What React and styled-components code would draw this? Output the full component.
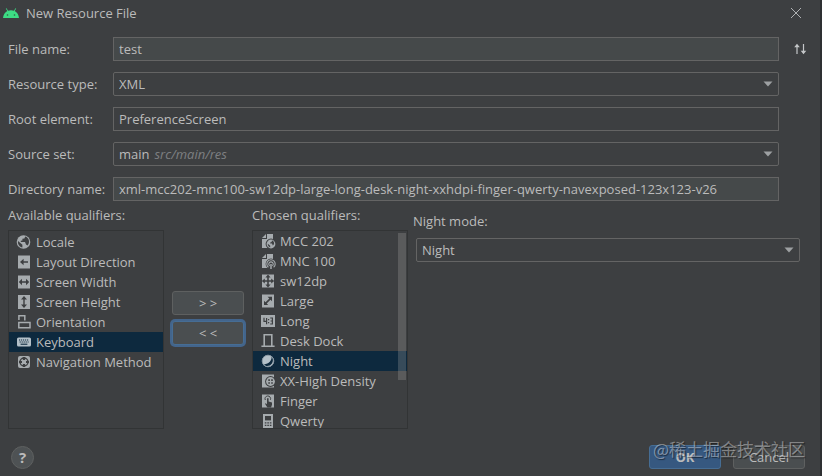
import { useState } from 'react';
import styled, { createGlobalStyle } from 'styled-components';

const resourceTypes = ['XML', 'Values', 'Layout', 'Drawable'];

const availableQualifiers = [
  { name: 'Locale', icon: 'globe' },
  { name: 'Layout Direction', icon: 'direction' },
  { name: 'Screen Width', icon: 'width' },
  { name: 'Screen Height', icon: 'height' },
  { name: 'Orientation', icon: 'orientation' },
  { name: 'Keyboard', icon: 'keyboard' },
  { name: 'Navigation Method', icon: 'navigation' },
];

const chosenQualifiers = [
  { name: 'MCC 202', icon: 'mcc' },
  { name: 'MNC 100', icon: 'mnc' },
  { name: 'sw12dp', icon: 'smallest' },
  { name: 'Large', icon: 'size' },
  { name: 'Long', icon: 'ratio' },
  { name: 'Desk Dock', icon: 'dock' },
  { name: 'Night', icon: 'night' },
  { name: 'XX-High Density', icon: 'density' },
  { name: 'Finger', icon: 'touch' },
  { name: 'Qwerty', icon: 'phone' },
];

const light = '#a6abae';
const dark = '#3d3f41';

const icons = {
  globe: (
    <>
      <circle cx="7.5" cy="8" r="6.8" fill={light} />
      <path d="M2 7 L6.4 10.8 V13.6 C3.6 13 1.6 10.4 2 7 Z" fill={dark} />
      <path d="M9.2 2.4 L8.4 4.4 L6.4 4.8 V6.4 L4.8 6.8 V8 H9 L10 10.4 L11.6 11.4 C14.2 8.4 13.2 3.6 9.2 2.4 Z" fill={dark} />
    </>
  ),
  direction: (
    <>
      <path d="M2 1.5h12v13H2z" fill={light} />
      <path d="M7.6 4.8 V7.2 H12 V8.8 H7.6 V11.2 L4 8 Z" fill={dark} />
    </>
  ),
  width: (
    <>
      <path d="M2 1.5h12v13H2z" fill={light} />
      <path d="M6 4.8 V7.2 H10 V4.8 L13.2 8 L10 11.2 V8.8 H6 V11.2 L2.8 8 Z" fill={dark} />
    </>
  ),
  height: (
    <>
      <path d="M2 1h12v14H2z" fill={light} />
      <path d="M5 5.4 H7.3 V10.6 H5 L8 14 L11 10.6 H8.7 V5.4 H11 L8 2 Z" fill={dark} />
    </>
  ),
  orientation: (
    <path d="M2.9 6 V1.8 H8.8 V6.6 M2.8 8.6 H14 V13.8 H2.8 Z" fill="none" stroke={light} strokeWidth="1.5" />
  ),
  keyboard: (
    <>
      <rect x="1" y="3.5" width="14" height="9" rx="1.6" fill="#b4c0c8" />
      <path d="M3 6h10M3.6 8h9" stroke="#0d293e" strokeWidth="1.1" strokeDasharray="1.2 0.8" />
      <path d="M4.6 10.2h6.8" stroke="#0d293e" strokeWidth="1.1" />
    </>
  ),
  navigation: (
    <>
      <rect x="2" y="2" width="12" height="12" rx="2" fill={light} />
      <circle cx="8" cy="8" r="4" fill="none" stroke={dark} strokeWidth="1.4" />
      <path d="M6.9 3h2.2v3H6.9zM6.9 10h2.2v3H6.9zM3 6.9h3v2.2H3zM10 6.9h3v2.2h-3z" fill={dark} />
    </>
  ),
  mcc: (
    <>
      <path d="M7 1h6v14H2V6h5z" fill={light} />
      <path d="M2 5 L6 1 V5 Z" fill={light} />
      <circle cx="11" cy="11" r="5.4" fill={dark} />
      <circle cx="11" cy="11" r="4.4" fill={light} />
      <path d="M7.8 10.8 L10.2 12.8 V14.4 C8.6 14 7.6 12.4 7.8 10.8 Z M12 7.6 L11.6 9 L10.2 9.4 V10.6 H12 L12.8 12.6 C15 11.4 14.2 8.2 12 7.6 Z" fill={dark} />
    </>
  ),
  mnc: (
    <>
      <path d="M7 1h6v14H2V6h5z" fill={light} />
      <path d="M2 5 L6 1 V5 Z" fill={light} />
      <circle cx="11" cy="11" r="5.4" fill={dark} />
      <path d="M8.4 14.3 A4.2 4.2 0 1 1 13.6 14.3 M9.6 12.8 A2.2 2.2 0 1 1 12.4 12.8" fill="none" stroke={light} strokeWidth="1.1" />
      <path d="M11 11v5" stroke={light} strokeWidth="1.5" />
    </>
  ),
  smallest: (
    <>
      <path d="M2 1.5h12v13H2z" fill={light} />
      <path d="M8 1.5 L10.6 4.6 H8.8 V7.2 H11.2 V5.4 L14.2 8 L11.2 10.6 V8.8 H8.8 V11.4 H10.6 L8 14.5 L5.4 11.4 H7.2 V8.8 H4.8 V10.6 L1.8 8 L4.8 5.4 V7.2 H7.2 V4.6 H5.4 Z" fill={dark} />
    </>
  ),
  size: (
    <>
      <path d="M2 1.5h12v13H2z" fill={light} />
      <path d="M7.6 3.8 H12 V8.2 L10.5 6.7 L6.7 10.5 L8.2 12 H4 V7.8 L5.5 9.3 L9.3 5.5 Z" fill={dark} />
    </>
  ),
  ratio: (
    <>
      <path d="M1 2h14v12H1z" fill={light} />
      <path d="M4 4.8V8.4H7M6.6 5V11.2M10.2 5H12.4V11H10.2M10.6 8H12.4" fill="none" stroke={dark} strokeWidth="1.2" />
      <path d="M8 6h1.2v1.3H8zM8 9h1.2v1.3H8z" fill={dark} />
    </>
  ),
  dock: (
    <path d="M4.2 12.4V1.8H11.8V12.4M1.4 13.2H14.6" fill="none" stroke={light} strokeWidth="1.6" />
  ),
  night: (
    <>
      <circle cx="8" cy="8" r="6" fill="#b4c0c8" />
      <path d="M11.6 3.6 C12 7.6 9 11 4 11.4 C5.2 12.8 7 13.2 8.6 12.8 C11.8 12 13.6 8.6 12.6 5.2 Z" fill="#0d293e" />
      <circle cx="8" cy="8" r="5.8" fill="none" stroke="#8796a1" strokeWidth="1" />
    </>
  ),
  density: (
    <>
      <path d="M2 1.5h12v13H2z" fill={light} />
      <circle cx="10.5" cy="8.5" r="5.4" fill={dark} />
      <circle cx="10.5" cy="8.5" r="4.4" fill={light} />
      <path d="M8.3 6.3h1.6v1.6H8.3zM11.2 6.3h1.6v1.6h-1.6zM8.3 9.2h1.6v1.6H8.3zM11.2 9.2h1.6v1.6h-1.6z" fill={dark} />
    </>
  ),
  touch: (
    <>
      <path d="M2 1.5h12v13H2z" fill={light} />
      <path d="M7 5.2h1.6v3.2l3.4 1v2.4l-1 2.7H7.4L5 10.8l.8-.6 1.2 1z" fill={dark} />
      <path d="M5.3 7 A2.8 2.8 0 1 1 10.4 6.8" fill="none" stroke={dark} strokeWidth="1" />
    </>
  ),
  phone: (
    <>
      <path d="M3 1h10v14H3z" fill={light} />
      <path d="M5 3h6v4.4H5z" fill={dark} />
      <path d="M4.8 9.8h6.6M4.8 12.4h6.6" stroke={dark} strokeWidth="1.3" strokeDasharray="1.6 0.9" />
    </>
  ),
};

function QualifierList({ id, items, selected, onSelect, inset, scrollable }) {
  return (
    <ListFrame>
      <List role="listbox" aria-labelledby={id} $inset={inset}>
        {items.map((item) => (
          <ListItem
            key={item.name}
            role="option"
            aria-selected={item.name === selected}
            $selected={item.name === selected}
            onClick={() => onSelect(item.name)}
          >
            <svg width="16" height="16" viewBox="0 0 16 16" aria-hidden="true">
              {icons[item.icon]}
            </svg>
            {item.name}
          </ListItem>
        ))}
      </List>
      {scrollable && <ScrollThumb />}
    </ListFrame>
  );
}

function DropDown({ id, options, value, onChange, hint }) {
  return (
    <SelectBox>
      <Select id={id} value={value} onChange={(e) => onChange(e.target.value)}>
        {options.map((option) => (
          <option key={option} value={option}>{option}</option>
        ))}
      </Select>
      {hint && (
        <SelectHint>
          <HintSpacer aria-hidden="true">{value}</HintSpacer>
          {hint}
        </SelectHint>
      )}
      <Arrow viewBox="0 0 10 6" aria-hidden="true">
        <path d="M0.5 0.5h9L5 5.5z" fill="#9da0a2" />
      </Arrow>
    </SelectBox>
  );
}

export default function App() {
  const [fileName, setFileName] = useState('test');
  const [resourceType, setResourceType] = useState('XML');
  const [rootElement, setRootElement] = useState('PreferenceScreen');
  const [sourceSet, setSourceSet] = useState('main');
  const [nightMode, setNightMode] = useState('Night');
  const [available, setAvailable] = useState('Keyboard');
  const [chosen, setChosen] = useState('Night');

  return (
    <>
      <GlobalStyle />
      <Dialog>
        <TitleBar>
          <svg width="16" height="10" viewBox="0 0 16 10" aria-hidden="true">
            <path d="M0 10 C0.3 6.8 1.9 4.4 4.3 3.1 L2.8 0.6 L3.5 0.2 L5.1 2.8 C7 2 9 2 10.9 2.8 L12.5 0.2 L13.2 0.6 L11.7 3.1 C14.1 4.4 15.7 6.8 16 10 Z" fill="#3ddc84" />
            <circle cx="4.5" cy="7" r="0.8" fill="#2d5c43" />
            <circle cx="11.5" cy="7" r="0.8" fill="#2d5c43" />
          </svg>
          <Title>New Resource File</Title>
          <IconButton type="button" aria-label="Close">
            <svg width="12" height="12" viewBox="0 0 12 12">
              <path d="M1 1l10 10M11 1L1 11" stroke="#afb1b3" strokeWidth="1" />
            </svg>
          </IconButton>
        </TitleBar>

        <Form>
          <FormLabel htmlFor="fileName">File name:</FormLabel>
          <TextField id="fileName" $filled value={fileName} onChange={(e) => setFileName(e.target.value)} />
          <IconButton type="button" aria-label="Sort">
            <svg width="14" height="12" viewBox="0 0 14 12">
              <path d="M4 11V2M10.5 1v9" stroke="#c4c6c8" strokeWidth="1.2" />
              <path d="M1.2 4.2L4 0.8l2.8 3.4zM7.7 7.8l2.8 3.4 2.8-3.4z" fill="#c4c6c8" />
            </svg>
          </IconButton>

          <FormLabel htmlFor="resourceType">Resource type:</FormLabel>
          <DropDown id="resourceType" options={resourceTypes} value={resourceType} onChange={setResourceType} />

          <FormLabel htmlFor="rootElement">Root element:</FormLabel>
          <TextField id="rootElement" value={rootElement} onChange={(e) => setRootElement(e.target.value)} />

          <FormLabel htmlFor="sourceSet">Source set:</FormLabel>
          <DropDown
            id="sourceSet"
            options={['main', 'debug', 'release']}
            value={sourceSet}
            onChange={setSourceSet}
            hint={`src/${sourceSet}/res`}
          />

          <FormLabel htmlFor="directoryName">Directory name:</FormLabel>
          <TextField
            id="directoryName"
            $filled
            readOnly
            value="xml-mcc202-mnc100-sw12dp-large-long-desk-night-xxhdpi-finger-qwerty-navexposed-123x123-v26"
          />
        </Form>

        <Qualifiers>
          <ListColumn>
            <ListLabel id="available">Available qualifiers:</ListLabel>
            <QualifierList id="available" items={availableQualifiers} selected={available} onSelect={setAvailable} inset />
          </ListColumn>
          <MoveButtons>
            <Button type="button">&gt; &gt;</Button>
            <Button type="button" $focused>&lt; &lt;</Button>
          </MoveButtons>
          <ListColumn>
            <ListLabel id="chosen">Chosen qualifiers:</ListLabel>
            <QualifierList id="chosen" items={chosenQualifiers} selected={chosen} onSelect={setChosen} scrollable />
          </ListColumn>
          <Options>
            <OptionLabel htmlFor="nightMode">Night mode:</OptionLabel>
            <OptionField>
              <DropDown id="nightMode" options={['Night', 'Not Night']} value={nightMode} onChange={setNightMode} />
            </OptionField>
          </Options>
        </Qualifiers>

        <Footer>
          <HelpButton type="button" aria-label="Help">?</HelpButton>
          <FooterButtons>
            <Button type="button" $primary>OK</Button>
            <Button type="button">Cancel</Button>
            <Watermark>@稀土掘金技术社区</Watermark>
          </FooterButtons>
        </Footer>
      </Dialog>
    </>
  );
}

const GlobalStyle = createGlobalStyle`
  * {
    box-sizing: border-box;
  }
  body {
    margin: 0;
    background-color: #3d3f41;
  }
  body, button, input, select {
    font-family: 'Open Sans', 'Noto Sans CJK SC', sans-serif;
    font-size: 13px;
    color: #bbbbbb;
  }
`;
const Dialog = styled.main`
  min-height: 100vh;
  display: flex;
  flex-direction: column;
  background-color: #3d3f41;
  border-right: 2px solid #2e3032;
`;
const TitleBar = styled.header`
  height: 25px;
  padding: 0 18px 0 3px;
  display: flex;
  align-items: center;
  gap: 7px;
`;
const Title = styled.h1`
  flex: 1;
  margin: 0;
  font-size: 13px;
  font-weight: 400;
`;
const IconButton = styled.button`
  padding: 0;
  border: none;
  background: none;
  display: flex;
  align-items: center;
  justify-content: center;
`;
const Form = styled.form`
  padding: 12px 0 0 8px;
  display: grid;
  grid-template-columns: 105px 1fr 41px;
  grid-auto-rows: 24px;
  row-gap: 11px;
  align-items: center;
`;
const FormLabel = styled.label`
  grid-column: 1;
`;
const TextField = styled.input`
  width: 100%;
  height: 24px;
  padding: 0 5px;
  border: 1px solid #646464;
  background-color: ${({ $filled }) => ($filled ? '#45494a' : '#3d3f41')};
  outline: none;
`;
const SelectBox = styled.div`
  position: relative;
`;
const Select = styled.select`
  display: block;
  width: 100%;
  height: 24px;
  padding: 0 24px 0 5px;
  border: 1px solid #646464;
  border-radius: 2px;
  background-color: #3d3f41;
  appearance: none;
  outline: none;
`;
const SelectHint = styled.span`
  position: absolute;
  top: 0;
  left: 6px;
  line-height: 24px;
  font-style: italic;
  color: #7d7f81;
  pointer-events: none;
`;
const HintSpacer = styled.span`
  margin-right: 5px;
  font-style: normal;
  visibility: hidden;
`;
const Arrow = styled.svg`
  position: absolute;
  top: 9px;
  right: 6px;
  width: 10px;
  height: 6px;
  pointer-events: none;
`;
const Qualifiers = styled.section`
  padding: 0 20px 0 8px;
  display: grid;
  grid-template-columns: 156px 88px 156px 1fr;
`;
const ListColumn = styled.div`
  display: flex;
  flex-direction: column;
`;
const ListLabel = styled.span`
  line-height: 29px;
`;
const ListFrame = styled.div`
  position: relative;
  height: 199px;
  border: 1px solid #323435;
`;
const List = styled.ul`
  height: 100%;
  margin: 0;
  padding: ${({ $inset }) => ($inset ? '1px 0' : '0')};
  list-style: none;
  overflow: hidden;
`;
const ListItem = styled.li`
  height: 20px;
  padding-left: 7px;
  display: flex;
  align-items: center;
  gap: 4px;
  white-space: nowrap;
  cursor: default;
  background-color: ${({ $selected }) => ($selected ? '#0d293e' : 'transparent')};
`;
const ScrollThumb = styled.span`
  position: absolute;
  top: 2px;
  right: 1px;
  width: 8px;
  height: 147px;
  background-color: rgba(166, 166, 166, 0.28);
`;
const MoveButtons = styled.div`
  padding: 90px 8px 0;
  display: flex;
  flex-direction: column;
  gap: 6px;
`;
const Button = styled.button`
  min-width: 72px;
  height: 24px;
  padding: 0;
  border: 1px solid ${({ $primary, $focused }) => ($primary || $focused ? '#466d94' : '#5e6060')};
  border-radius: 3px;
  background-color: ${({ $primary }) => ($primary ? '#365880' : '#4a4e50')};
  box-shadow: ${({ $focused }) => ($focused ? '0 0 0 2px #43658c' : 'none')};
  font-weight: ${({ $primary }) => ($primary ? '700' : '400')};
`;
const Options = styled.div`
  padding: 10px 0 0 5px;
`;
const OptionLabel = styled.label`
  display: block;
  line-height: 20px;
`;
const OptionField = styled.div`
  padding: 7px 0 0 3px;
`;
const Footer = styled.footer`
  margin-top: auto;
  padding: 0 15px 7px 11px;
  display: flex;
  align-items: center;
  justify-content: space-between;
`;
const HelpButton = styled.button`
  width: 23px;
  height: 23px;
  padding: 0;
  border: 1px solid #5e6060;
  border-radius: 50%;
  background-color: #4e5254;
  font-size: 15px;
  font-weight: 700;
  line-height: 20px;
`;
const FooterButtons = styled.div`
  position: relative;
  display: flex;
  gap: 12px;
`;
const Watermark = styled.span`
  position: absolute;
  right: 0;
  bottom: 8px;
  font-family: 'Noto Sans CJK SC', sans-serif;
  font-size: 17px;
  line-height: 24px;
  white-space: nowrap;
  color: rgba(255, 255, 255, 0.4);
  text-shadow: 1px 1px 1px rgba(0, 0, 0, 0.5);
  pointer-events: none;
`;
